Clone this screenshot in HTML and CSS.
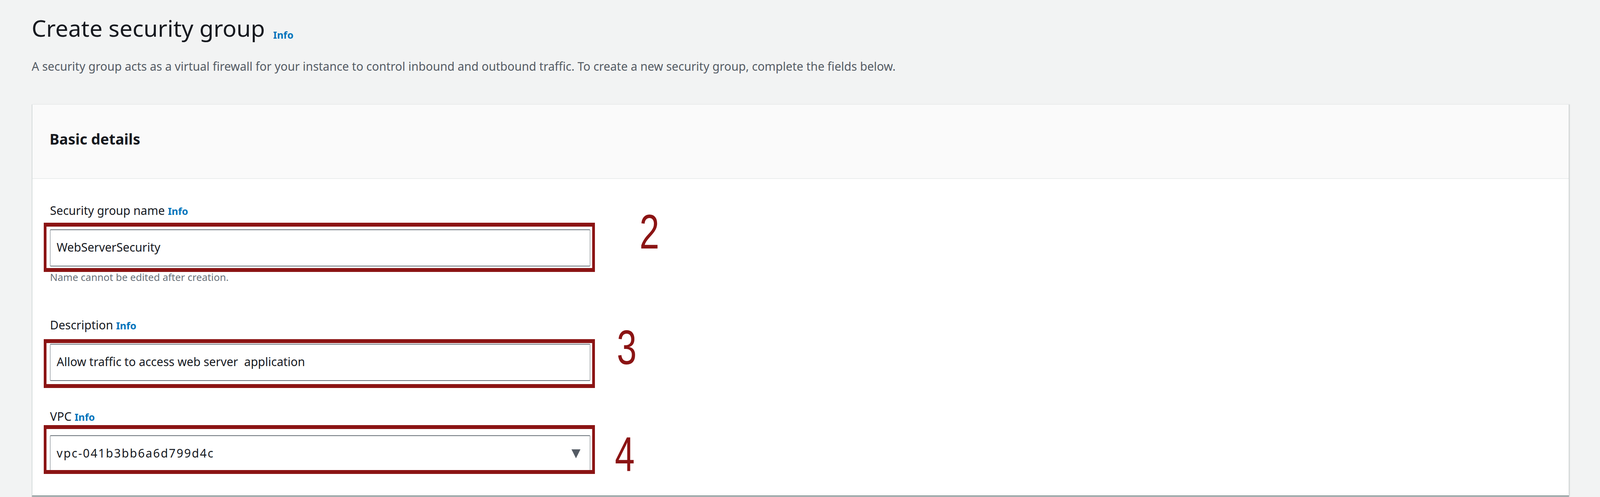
FILE: index.html
```html
<!DOCTYPE html>
<html lang="en">
<head>
  <meta charset="UTF-8" />
  <title>Create security group</title>
  <link rel="stylesheet" href="styles.css">
</head>
<body>
  <div class="page">
    <h1 class="page-title">Create security group<a href="#" class="info">Info</a></h1>
    <p class="page-desc">A security group acts as a virtual firewall for your instance to control inbound and outbound traffic. To create a new security group, complete the fields below.</p>

    <section class="container">
      <header class="container-header">
        <h2>Basic details</h2>
      </header>
      <div class="container-body">

        <div class="field">
          <label for="sg_name">Security group name <a href="#" class="info">Info</a></label>
          <div class="control">
            <input type="text" id="sg_name" value="WebServerSecurity">
            <span class="callout callout-name"></span>
            <span class="callout-num num-2">2</span>
          </div>
          <p class="hint">Name cannot be edited after creation.</p>
        </div>

        <div class="field">
          <label for="sg_desc">Description <a href="#" class="info">Info</a></label>
          <div class="control">
            <input type="text" id="sg_desc" value="Allow traffic to access web server  application">
            <span class="callout callout-desc"></span>
            <span class="callout-num num-3">3</span>
          </div>
        </div>

        <div class="field">
          <label for="sg_vpc">VPC <a href="#" class="info">Info</a></label>
          <div class="control">
            <button type="button" id="sg_vpc" class="select">
              <span class="select-value">vpc-041b3bb6a6d799d4c</span>
              <svg class="caret" width="23" height="23" viewBox="0 0 23 23" preserveAspectRatio="none"><polygon points="0,0 23,0 11.5,23" fill="#545b64"/></svg>
            </button>
            <span class="callout callout-vpc"></span>
            <span class="callout-num num-4">4</span>
          </div>
        </div>

      </div>
    </section>
  </div>
</body>
</html>
```
FILE: styles.css
```css
* { box-sizing: border-box; }
html, body {
  margin: 0; padding: 0; height: 100%; overflow: hidden;
}
body {
  background: #f2f3f3; color: #16191f;
  font-family: "Noto Sans", "Open Sans", sans-serif;
}
.page { padding: 20.7px 79px 0 81px; }

.page-title {
  margin: 0; font-size: 59px; font-weight: 400; line-height: 100px;
}
.info {
  font-size: 25.3px; font-weight: 700; line-height: 1;
  color: #0073bb; text-decoration: none;
}
.page-title .info { margin-left: 21px; vertical-align: -5px; }
.page-desc {
  margin: 21.3px 0 0; font-size: 30px; line-height: 56px; color: #545b64;
}

/* card */
.container {
  margin-top: 69px; background: #fff;
  border-top: 1px solid #eaeded; border-left: 2.5px solid #d5dbdb;
  border-right: 1.5px solid #c2c7c7; border-bottom: 3px solid #879596;
  box-shadow: 1.5px 0 2px rgba(0, 28, 36, 0.1);
}
.container-header {
  background: #fafafa; border-bottom: 2px solid #eaeded;
  padding: 52.8px 44px 65.2px;
}
.container-header h2 {
  margin: 0; font-size: 37.4px; font-weight: 700; line-height: 70px;
}
.container-body { padding: 53.5px 45px 59px; }

/* fields */
.field { display: flow-root; }
.field + .field { margin-top: 63.5px; }
.field label {
  display: block; font-size: 30px; line-height: 56px; margin-bottom: 19.5px;
}
.control { position: relative; width: 1383px; }
.control input, .select {
  width: 100%; height: 95px; margin: 0;
  border: 2px solid #687078; border-left-width: 1.5px; border-right-width: 1.5px;
  border-radius: 2px; background: #fff;
  padding: 0 16px 4px; font-family: inherit; font-size: 30px; color: #16191f;
}
.select {
  display: flex; align-items: center; justify-content: space-between;
  padding-right: 23.6px; text-align: left; cursor: pointer;
}
.select-value { letter-spacing: 2.4px; }
.select .caret { margin-top: 4px; }
.hint {
  margin: 7.2px 0 9.8px; font-size: 25.6px; line-height: 42px; color: #687078;
}

/* annotations drawn over the form */
.callout {
  position: absolute; left: -16.2px; right: -11.8px;
  border: 10px solid #8b1414; border-left-width: 7.4px; border-right-width: 7.4px;
  pointer-events: none;
}
.callout-name { top: -17px; bottom: -14px; }
.callout-desc { top: -12px; bottom: -18px; }
.callout-vpc { top: -26px; bottom: -4px; }
.callout-num {
  position: absolute; font-family: "Liberation Sans", Arial, sans-serif;
  font-size: 124px; line-height: 1; color: #8b1414;
  transform: scaleX(0.737); transform-origin: 0 0;
}
.num-2 { left: calc(100% + 125.5px); top: -56.2px; }
.num-3 { left: calc(100% + 68.3px); top: -53.2px; }
.num-4 { left: calc(100% + 63.1px); top: -14.2px; }
```
